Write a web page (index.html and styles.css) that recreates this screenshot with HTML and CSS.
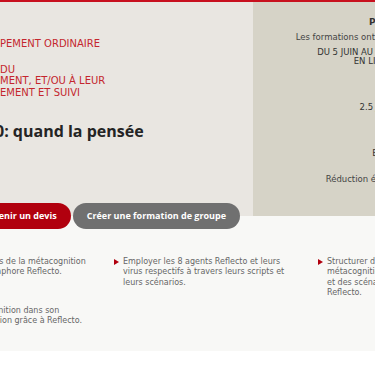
FILE: index.html
```html
<!DOCTYPE html>
<html lang="fr">
<head>
<meta charset="utf-8">
<link rel="stylesheet" href="styles.css">
</head>
<body>
<div class="topline"></div>
<section class="hero">
  <div class="hero-main">
    <p class="kicker">PEMENT ORDINAIRE</p>
    <p class="kicker">DU<br>MENT, ET/OU À LEUR<br>EMENT ET SUIVI</p>
    <h1 class="title">0: quand la pensée</h1>
    <div class="actions">
      <a class="btn btn-red">Obtenir un devis</a>
      <a class="btn btn-gray">Créer une formation de groupe</a>
    </div>
  </div>
  <aside class="panel">
    <p class="panel-title">PRIX</p>
    <p class="panel-text">Les formations ont lieu en ligne (Zoom).</p>
    <p class="panel-caps">DU 5 JUIN AU 22 JUILLET 2023<br>EN LIGNE 9H</p>
    <p class="panel-caps panel-days">2.5 JOURS</p>
    <p class="panel-caps panel-price">EUR</p>
    <p class="panel-text panel-reduc">Réduction étudiant : 20 %</p>
  </aside>
</section>
<section class="outcomes">
  <ul class="grid">
    <li>Repérer les principes de la métacognition à travers cette métaphore Reflecto.</li>
    <li>Employer les 8 agents Reflecto et leurs virus respectifs à travers leurs scripts et leurs scénarios.</li>
    <li>Structurer des séances pratiques de métacognition basées sur les huit agents et des scénarios mis à disposition par Reflecto.</li>
    <li>Intégrer la métacognition dans son quotidien et sa mission grâce à Reflecto.</li>
  </ul>
</section>
</body>
</html>
```
FILE: styles.css
```css
html, body {
  margin: 0;
  padding: 0;
  background: #ffffff;
  overflow: hidden;
}
body {
  font-family: "DejaVu Sans", "Open Sans", sans-serif;
  width: 375px;
}
p { margin: 0; }
.topline {
  height: 2px;
  background: #c8101e;
}
.hero {
  display: flex;
  height: 214px;
}
.hero-main {
  width: 253px;
  flex: none;
  background: #e9e6e1;
  padding-top: 36px;
  box-sizing: border-box;
}
.kicker {
  color: #c4262e;
  font-size: 10px;
  line-height: 11.5px;
  margin-bottom: 14px;
  white-space: nowrap;
}
.title {
  margin: 23px 0 0 -5px;
  font-family: "Open Sans", "DejaVu Sans", sans-serif;
  font-size: 16px;
  line-height: 20px;
  font-weight: bold;
  color: #242424;
  white-space: nowrap;
}
.actions {
  display: flex;
  gap: 2px;
  margin-top: 62px;
  margin-left: -32px;
  position: relative;
  z-index: 1;
}
.btn {
  display: block;
  height: 26px;
  line-height: 26px;
  border-radius: 13px;
  color: #fff;
  font-family: "Open Sans", "DejaVu Sans", sans-serif;
  font-size: 9px;
  font-weight: bold;
  padding: 0 14px;
  white-space: nowrap;
}
.btn-red { background: #b1000e; }
.btn-gray { background: #707070; }
.panel {
  width: 256px;
  flex: none;
  background: #d6d3c7;
  text-align: center;
  color: #333;
  padding-top: 14px;
  box-sizing: border-box;
}
.panel-title {
  font-weight: bold;
  font-size: 9px;
  line-height: 12px;
}
.panel-text {
  font-size: 8.5px;
  line-height: 10px;
  margin-top: 4px;
  color: #444;
}
.panel-caps {
  font-size: 8.5px;
  line-height: 9px;
  margin-top: 6px;
  color: #333;
}
.panel-days { margin-top: 37px; }
.panel-price { margin-top: 37px; }
.panel-reduc { margin-top: 16px; }
.outcomes {
  background: #f8f8f6;
  height: 135px;
  padding-top: 41px;
  box-sizing: border-box;
}
.grid {
  list-style: none;
  margin: 0 0 0 -90px;
  padding: 0;
  display: grid;
  grid-template-columns: repeat(3, 204px);
  row-gap: 8px;
}
.grid li {
  position: relative;
  padding: 0 22px 0 9px;
  font-size: 8px;
  line-height: 10.3px;
  color: #666;
}
.grid li::before {
  content: "";
  position: absolute;
  left: 0;
  top: 2px;
  border-left: 5px solid #b1000e;
  border-top: 3.5px solid transparent;
  border-bottom: 3.5px solid transparent;
}
```
